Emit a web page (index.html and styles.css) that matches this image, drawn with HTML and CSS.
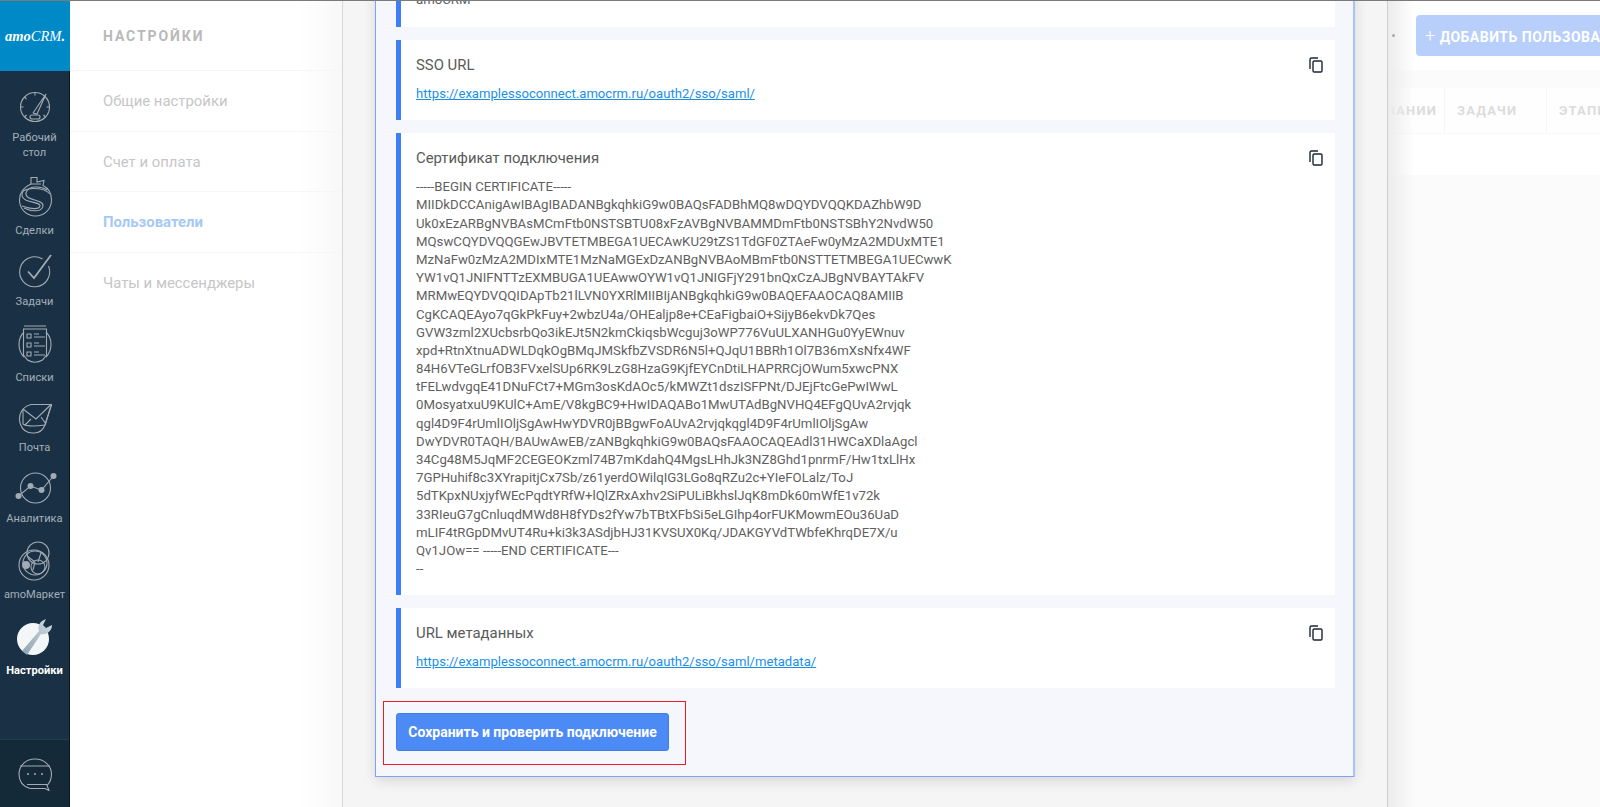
FILE: index.html
```html
<!DOCTYPE html>
<html lang="ru">
<head>
<meta charset="utf-8">
<title>Настройки</title>
<link rel="stylesheet" href="styles.css">
</head>
<body>
<div class="app">
  <aside class="sidebar">
    <div class="logo">amo<span class="logo-thin">CRM</span>.</div>
    <nav class="nav">
      <a class="nav-item item-dash">
        <svg class="ico" width="36" height="36" viewBox="0 0 36 36"><circle cx="18" cy="18" r="14.5"/><path d="M29 5 16 24M29 5l-9 20-4-1M18 3.500v3M3.500 18h3M29.500 18h3M7.500 8l2 2M7.500 28l2-2M28.500 28l-2-2"/><rect x="13" y="26" width="10" height="4" rx="2"/></svg>
        <span>Рабочий<br>стол</span>
      </a>
      <a class="nav-item item-deals">
        <svg class="ico" width="36" height="42" viewBox="0 0 36 42"><path d="M14 9V2.500h6V7l7-1.500-1 5C31 13 34.500 18 34.500 25c0 9-7 16-16 16S2.500 34 2.500 25c0-7 4.500-13 11.500-16z"/><path d="M14 9h10M30 15c-6-4-19-5-21 3-2 8 18 6 17 13-1 6-11 6-19 2"/><path d="M33 19c-6-7-29-8-28 1 1 9 19 6 18 11-1 4-9 3-18 0"/></svg>
        <span>Сделки</span>
      </a>
      <a class="nav-item item-tasks">
        <svg class="ico" width="36" height="36" viewBox="0 0 36 36"><path d="M31.500 13a15 15 0 1 1-6-7"/><path class="thick" d="M11 18.500 17 25 34 2"/></svg>
        <span>Задачи</span>
      </a>
      <a class="nav-item item-lists">
        <svg class="ico" width="36" height="40" viewBox="0 0 36 40"><path d="M7 1h22M7 7c-3 3-5 7-5 12s2 10 5 13M29 7c3 3 5 7 5 12s-2 10-5 13"/><path d="M6.500 4h23v26l-4 5c-5 3-10 3-15 0l-4-5z"/><path d="M10 9h4v4h-4zM10 18h4v4h-4zM10 27h4v4h-4zM17 9h5M17 12h11M17 18h5M17 21h11M17 27h5M17 30h11"/></svg>
        <span>Списки</span>
      </a>
      <a class="nav-item item-mail">
        <svg class="ico" width="36" height="33" viewBox="0 0 36 33"><path d="M34.500 3.500H14A15 15 0 0 0 6 8C-1 17 3 33 17 32c5 0 9-3 11-8z"/><path d="M34.500 3.500 28 24c-7 1-18 2-22-1L6 8"/><path d="M6 8l13 10L34 3.500M8 24l6-6M29 23l-5-7"/></svg>
        <span>Почта</span>
      </a>
      <a class="nav-item item-stats">
        <svg class="ico" width="44" height="32" viewBox="0 0 44 32"><circle cx="22.500" cy="16" r="15"/><path d="M5.500 24 17.500 14 28.500 18 40.500 4"/><circle class="fill" cx="5.500" cy="24" r="3"/><circle class="fill" cx="17.500" cy="14" r="3"/><circle class="fill" cx="28.500" cy="18" r="3"/><circle class="fill" cx="40.500" cy="4" r="3"/></svg>
        <span>Аналитика</span>
      </a>
      <a class="nav-item item-market">
        <svg class="ico" width="36" height="40" viewBox="0 0 36 40"><circle cx="21" cy="12" r="11"/><circle cx="17" cy="24" r="15"/><circle cx="18" cy="22" r="12"/><circle cx="21" cy="26" r="7"/><path d="M10 15l8 6M24 12l-3 9M18 21l-2 8"/><circle class="fill" cx="9" cy="24" r="4"/></svg>
        <span>amoМаркет</span>
      </a>
      <a class="nav-item item-settings active">
        <svg width="38" height="38" viewBox="0 0 38 38"><defs><linearGradient id="wrench" x1="0" y1="1" x2="1" y2="0"><stop offset="0" stop-color="#8fa3b1"/><stop offset="1" stop-color="#cfdbe3"/></linearGradient></defs><circle cx="17" cy="21" r="16" fill="#f4f7f8"/><path d="M6 33 23 13c-2-5 1-10 7-12l-3 6 3 3 6-3c0 6-5 10-11 9L11 37z" fill="url(#wrench)"/></svg>
        <span>Настройки</span>
      </a>
    </nav>
    <div class="chat">
      <svg class="ico" width="36" height="34" viewBox="0 0 36 34"><path d="M18 2C9 2 2 8.500 2 17c0 7 4 12.500 11 14.500h15l4 2-2-5c3-3 4.500-7 4.500-11.500C34.500 8.500 27 2 18 2z"/><path d="M3 9h30M10 27.500h20"/><circle class="fill" cx="11" cy="17" r="1"/><circle class="fill" cx="18" cy="17" r="1"/><circle class="fill" cx="25" cy="17" r="1"/></svg>
    </div>
  </aside>

  <section class="settings">
    <h2 class="settings-title">НАСТРОЙКИ</h2>
    <a class="settings-link">Общие настройки</a>
    <a class="settings-link">Счет и оплата</a>
    <a class="settings-link current">Пользователи</a>
    <a class="settings-link">Чаты и мессенджеры</a>
  </section>

  <main class="panel">
    <div class="card">
      <div class="field field-clipped">
        <p class="value">amoCRM</p>
      </div>
      <div class="field">
        <div class="field-head">
          <h3 class="field-title">SSO URL</h3>
          <svg class="copy" width="14" height="16" viewBox="0 0 14 16"><path d="M9 1H2.500A1.500 1.500 0 0 0 1 2.500V12"/><rect x="4" y="4" width="9" height="11" rx="1.200"/></svg>
        </div>
        <a class="link">https://examplessoconnect.amocrm.ru/oauth2/sso/saml/</a>
      </div>
      <div class="field">
        <div class="field-head">
          <h3 class="field-title">Сертификат подключения</h3>
          <svg class="copy" width="14" height="16" viewBox="0 0 14 16"><path d="M9 1H2.500A1.500 1.500 0 0 0 1 2.500V12"/><rect x="4" y="4" width="9" height="11" rx="1.200"/></svg>
        </div>
        <pre class="cert">-----BEGIN CERTIFICATE-----
MIIDkDCCAnigAwIBAgIBADANBgkqhkiG9w0BAQsFADBhMQ8wDQYDVQQKDAZhbW9D
Uk0xEzARBgNVBAsMCmFtb0NSTSBTU08xFzAVBgNVBAMMDmFtb0NSTSBhY2NvdW50
MQswCQYDVQQGEwJBVTETMBEGA1UECAwKU29tZS1TdGF0ZTAeFw0yMzA2MDUxMTE1
MzNaFw0zMzA2MDIxMTE1MzNaMGExDzANBgNVBAoMBmFtb0NSTTETMBEGA1UECwwK
YW1vQ1JNIFNTTzEXMBUGA1UEAwwOYW1vQ1JNIGFjY291bnQxCzAJBgNVBAYTAkFV
MRMwEQYDVQQIDApTb21lLVN0YXRlMIIBIjANBgkqhkiG9w0BAQEFAAOCAQ8AMIIB
CgKCAQEAyo7qGkPkFuy+2wbzU4a/OHEaljp8e+CEaFigbaiO+SijyB6ekvDk7Qes
GVW3zml2XUcbsrbQo3ikEJt5N2kmCkiqsbWcguj3oWP776VuULXANHGu0YyEWnuv
xpd+RtnXtnuADWLDqkOgBMqJMSkfbZVSDR6N5l+QJqU1BBRh1Ol7B36mXsNfx4WF
84H6VTeGLrfOB3FVxelSUp6RK9LzG8HzaG9KjfEYCnDtiLHAPRRCjOWum5xwcPNX
tFELwdvgqE41DNuFCt7+MGm3osKdAOc5/kMWZt1dszISFPNt/DJEjFtcGePwIWwL
0MosyatxuU9KUlC+AmE/V8kgBC9+HwIDAQABo1MwUTAdBgNVHQ4EFgQUvA2rvjqk
qgl4D9F4rUmlIOljSgAwHwYDVR0jBBgwFoAUvA2rvjqkqgl4D9F4rUmlIOljSgAw
DwYDVR0TAQH/BAUwAwEB/zANBgkqhkiG9w0BAQsFAAOCAQEAdl31HWCaXDlaAgcl
34Cg48M5JqMF2CEGEOKzml74B7mKdahQ4MgsLHhJk3NZ8Ghd1pnrmF/Hw1txLlHx
7GPHuhif8c3XYrapitjCx7Sb/z61yerdOWilqIG3LGo8qRZu2c+YIeFOLalz/ToJ
5dTKpxNUxjyfWEcPqdtYRfW+lQlZRxAxhv2SiPULiBkhslJqK8mDk60mWfE1v72k
33RIeuG7gCnluqdMWd8H8fYDs2fYw7bTBtXFbSi5eLGIhp4orFUKMowmEOu36UaD
mLIF4tRGpDMvUT4Ru+ki3k3ASdjbHJ31KVSUX0Kq/JDAKGYVdTWbfeKhrqDE7X/u
Qv1JOw== -----END CERTIFICATE---
--</pre>
      </div>
      <div class="field">
        <div class="field-head">
          <h3 class="field-title">URL метаданных</h3>
          <svg class="copy" width="14" height="16" viewBox="0 0 14 16"><path d="M9 1H2.500A1.500 1.500 0 0 0 1 2.500V12"/><rect x="4" y="4" width="9" height="11" rx="1.200"/></svg>
        </div>
        <a class="link">https://examplessoconnect.amocrm.ru/oauth2/sso/saml/metadata/</a>
      </div>
      <div class="actions">
        <button class="save">Сохранить и проверить подключение</button>
      </div>
    </div>
  </main>

  <section class="behind">
    <div class="behind-top">
      <span class="dot"></span>
      <button class="add"><span class="plus">+</span> ДОБАВИТЬ ПОЛЬЗОВАТЕЛЯ</button>
    </div>
    <div class="behind-band"></div>
    <div class="thead">
      <div class="th th-clip">КОМПАНИИ</div>
      <div class="th th-tasks">ЗАДАЧИ</div>
      <div class="th">ЭТАПЫ</div>
    </div>
    <div class="trow"></div>
  </section>
</div>
</body>
</html>
```

FILE: styles.css
```css
* { box-sizing: border-box; }
html, body { margin: 0; height: 100%; }
body {
  font-family: "Roboto", "Noto Sans", "Liberation Sans", sans-serif;
  font-size: 14px;
  background: #fff;
  overflow: hidden;
}
.app {
  display: flex;
  height: 807px;
  border-top: 1px solid #7a7a7a;
}

/* left navigation */
.sidebar {
  width: 70px;
  flex: none;
  display: flex;
  flex-direction: column;
  background: #1a3145;
  border-right: 1px solid #0b1620;
}
.logo {
  height: 70px;
  margin-right: -1px;
  background: #0089c7;
  color: #fff;
  font: italic 700 14.500px/70px "Liberation Serif", serif;
  text-align: center;
  position: relative;
}
.logo-thin { font-weight: 400; }
.nav {
  flex: 1;
  display: flex;
  flex-direction: column;
}
.nav-item {
  display: flex;
  flex-direction: column;
  align-items: center;
  color: #a3afb9;
  font-size: 11.100px;
  line-height: 15px;
  text-align: center;
}
.ico { fill: none; stroke: #a2abb3; stroke-width: 1.1; }
.ico .fill { fill: #a2abb3; stroke: none; }
.ico .thick { stroke-width: 1.8; }
.item-dash { padding-top: 18px; }
.item-dash span { margin-top: 5px; }
.item-deals { padding-top: 15px; }
.item-deals span { margin-top: 5.500px; }
.item-tasks { padding-top: 15.500px; }
.item-tasks span { margin-top: 5px; }
.item-lists { padding-top: 16px; }
.item-lists span { margin-top: 5px; }
.item-mail { padding-top: 16px; }
.item-mail span { margin-top: 6px; }
.item-stats { padding-top: 17px; }
.item-stats span { margin-top: 7px; }
.item-market { padding-top: 15px; }
.item-market span { margin-top: 6px; }
.item-settings { padding-top: 16px; }
.item-settings span { margin-top: 7px; }
.active { color: #fff; font-weight: 700; }
.chat {
  height: 68px;
  display: flex;
  align-items: center;
  justify-content: center;
  background: #152a38;
  border-top: 1px solid #223c50;
}

/* settings column */
.settings {
  width: 272px;
  flex: none;
  display: flex;
  flex-direction: column;
  background: linear-gradient(to right, #fff 84%, #f8f8f8 100%);
}
.settings-title {
  height: 70px;
  margin: 0;
  padding-left: 33px;
  color: #b9b9b9;
  font-size: 14px;
  font-weight: 700;
  line-height: 70px;
  letter-spacing: 1.900px;
  border-bottom: 1px solid #f6f6f6;
}
.settings-link {
  height: 60.700px;
  padding-left: 33px;
  color: #c6c6c6;
  font-size: 14.900px;
  line-height: 61px;
  border-bottom: 1px solid #f6f6f6;
}
.settings-link:last-child { border-bottom: 0; }
.settings-link.current { color: #a6c9f3; font-weight: 700; }

/* overlay panel */
.panel {
  width: 1046px;
  flex: none;
  padding-left: 32px;
  background: #f5f5f5;
  border-left: 1px solid #d8d8d8;
  border-right: 1px solid #cfcfcf;
  overflow: hidden;
}
.card {
  width: 980px;
  margin-top: -10px;
  padding: 0 18px 0 20px;
  display: flex;
  flex-direction: column;
  gap: 13px;
  background: #f5f7fc;
  border: 1px solid #7ea3ef;
  border-right: 2px solid #a9c2f6;
  border-top: 0;
  box-shadow: 0 4px 12px rgba(0, 0, 0, .12);
}
.field {
  padding: 14px 12px 17px 15px;
  background: #fff;
  border-left: 5px solid #3f7ff5;
}
.field-clipped { padding-top: 0; padding-bottom: 18px; }
.field-head {
  display: flex;
  justify-content: space-between;
  align-items: flex-start;
  margin-bottom: 9px;
}
.field-title {
  margin: 0;
  color: #5a5a5a;
  font-size: 14.900px;
  font-weight: 400;
  line-height: 22px;
}
.copy {
  margin-top: 3px;
  fill: none;
  stroke: #1d2535;
  stroke-width: 1.400;
}
.value, .cert {
  margin: 0;
  color: #5f5f5f;
  font-family: inherit;
  font-size: 13.200px;
  line-height: 18.180px;
}
.link {
  display: block;
  color: #1a8fe8;
  font-size: 13.100px;
  line-height: 18px;
  text-decoration: underline;
}
.actions {
  align-self: flex-start;
  margin: 0 0 11px -13px;
  padding: 11px 16px 13px 12px;
  border: 1px solid #ee1c25;
}
.save {
  display: block;
  width: 273px;
  height: 38px;
  padding: 0;
  color: #fff;
  font-family: inherit;
  font-size: 14px;
  font-weight: 700;
  background: #4c8bf5;
  border: 1px solid #3f7de6;
  border-radius: 3px;
}

/* page behind the overlay */
.behind {
  flex: 1;
  min-width: 0;
  position: relative;
  overflow: hidden;
  background: #fbfbfb;
}
.behind::before {
  content: "";
  position: absolute;
  top: 0;
  bottom: 0;
  left: 0;
  width: 26px;
  background: linear-gradient(to right, #ececec, rgba(251, 251, 251, 0));
}
.behind-top {
  height: 69px;
  display: flex;
  padding: 14px 0 0 28px;
  background: #fff;
  white-space: nowrap;
}
.dot {
  position: absolute;
  top: 33px;
  left: 4px;
  width: 3px;
  height: 3px;
  border-radius: 50%;
  background: #aaa;
}
.add {
  flex: none;
  width: 260px;
  height: 41px;
  padding: 0 0 0 9px;
  color: #fff;
  font-family: inherit;
  font-size: 14px;
  font-weight: 700;
  letter-spacing: .5px;
  text-align: left;
  background: #b7cffa;
  border: 0;
  border-radius: 4px;
}
.plus { font-weight: 300; font-size: 18px; }
.behind-band { height: 18px; }
.thead {
  height: 46px;
  display: flex;
  background: #fefefe;
  border-bottom: 1px solid #f8f8f8;
}
.th {
  width: 102px;
  flex: none;
  padding-left: 12px;
  color: #dcdcdc;
  font-size: 13px;
  font-weight: 700;
  line-height: 46px;
  letter-spacing: 1.200px;
  border-right: 1px solid #f6f6f6;
}
.th-clip {
  width: 57px;
  padding: 0 7px 0 0;
  display: flex;
  justify-content: flex-end;
  overflow: hidden;
}
.trow { height: 41px; background: #fff; }
```
